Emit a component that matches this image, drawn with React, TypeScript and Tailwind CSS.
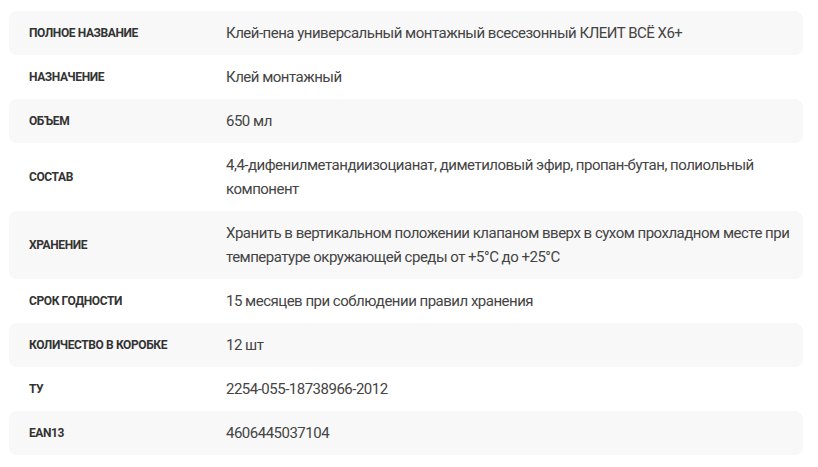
const rows = [
  { label: "Полное название", value: "Клей-пена универсальный монтажный всесезонный КЛЕИТ ВСЁ Х6+" },
  { label: "Назначение", value: "Клей монтажный" },
  { label: "Объем", value: "650 мл" },
  { label: "Состав", value: "4,4-дифенилметандиизоцианат, диметиловый эфир, пропан-бутан, полиольный компонент" },
  { label: "Хранение", value: "Хранить в вертикальном положении клапаном вверх в сухом прохладном месте при температуре окружающей среды от +5°C до +25°C" },
  { label: "Срок годности", value: "15 месяцев при соблюдении правил хранения" },
  { label: "Количество в коробке", value: "12 шт" },
  { label: "ТУ", value: "2254-055-18738966-2012" },
  { label: "EAN13", value: "4606445037104" },
];

export default function App() {
  return (
    <div className="min-h-screen bg-white pt-[11px] pl-[9px] pr-[15px] font-['Roboto',sans-serif]">
      {rows.map((row, i) => (
        <div
          key={i}
          className={`flex items-center rounded-lg py-[10px] pl-[20px] pr-[12px] ${i % 2 === 0 ? "bg-[#f8f8f8]" : ""}`}
        >
          <div className="w-[197px] shrink-0 text-[12px] font-bold uppercase tracking-[-0.4px] text-[#333]">
            {row.label}
          </div>
          <div className="flex-1 text-[15px] leading-[24px] tracking-[-0.5px] text-[#444]">{row.value}</div>
        </div>
      ))}
    </div>
  );
}
